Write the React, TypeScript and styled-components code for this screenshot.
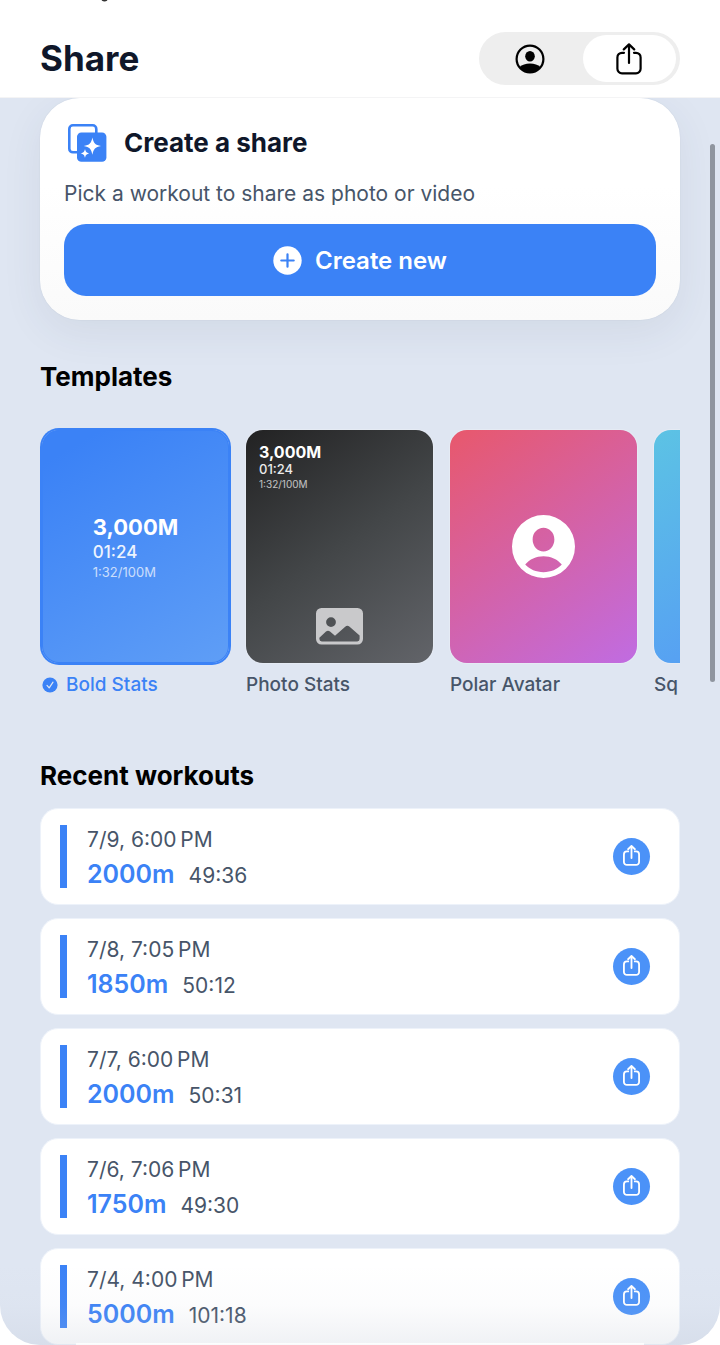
import React from "react";
import styled, { createGlobalStyle } from "styled-components";

const blue = "#3b82f6";
const slate = "#475569";
const ink = "#0f172a";

const GlobalStyle = createGlobalStyle`
  *, *::before, *::after { box-sizing: border-box; }
  body { margin: 0; background: #fff; font-family: Inter, "Liberation Sans", sans-serif; }
  button { font: inherit; color: inherit; border: 0; padding: 0; background: none; cursor: pointer; }
  h1, h2, p, ul { margin: 0; padding: 0; }
  svg { display: block; flex: none; }
`;

const Screen = styled.div`
  position: relative;
  display: flex;
  flex-direction: column;
  height: 100vh;
  overflow: hidden;
`;

const Header = styled.header`
  position: relative;
  display: flex;
  align-items: center;
  justify-content: space-between;
  flex: none;
  height: 98px;
  padding: 20px 40px 0;
  background: #fff;
  border-bottom: 1px solid #f4f4f5;
`;

const StatusTail = styled.svg`
  position: absolute;
  top: 0;
  left: 100px;
`;

const PageTitle = styled.h1`
  padding-bottom: 2px;
  font-size: 35px;
  line-height: 44px;
  font-weight: 700;
  color: ${ink};
`;

const Segmented = styled.div`
  display: grid;
  grid-template-columns: 1fr 1fr;
  gap: 6px;
  width: 201px;
  height: 53px;
  padding: 3px 4px;
  border-radius: 27px;
  background: #eeeeee;
`;

const Segment = styled.button<{ $active?: boolean }>`
  display: flex;
  align-items: center;
  justify-content: center;
  border-radius: 24px;
  color: #000;
  background: ${(p) => (p.$active ? "#fff" : "transparent")};
`;

const Main = styled.main`
  position: relative;
  flex: 1;
  min-height: 0;
  overflow: hidden;
  padding: 0 40px;
  background: #dfe6f2;
  border-radius: 0 0 40px 40px;
`;

const Card = styled.section`
  display: flex;
  flex-direction: column;
  gap: 16px;
  padding: 24px;
  border-radius: 40px;
  background: linear-gradient(#fff 40%, #fafafa);
  box-shadow: 0 12px 40px rgba(51, 65, 95, 0.08), 0 0 1px rgba(51, 65, 95, 0.2);
`;

const CardHead = styled.div`
  display: flex;
  align-items: center;
  gap: 17px;
  height: 42px;
  padding-left: 4px;
`;

const Heading = styled.h2<{ $color?: string }>`
  font-size: 26px;
  line-height: 32px;
  font-weight: 700;
  color: ${(p) => p.$color ?? "#000"};
`;

const Hint = styled.p`
  font-size: 21px;
  line-height: 28px;
  color: ${slate};
`;

const CreateButton = styled.button`
  display: flex;
  align-items: center;
  justify-content: center;
  gap: 13px;
  height: 72px;
  border-radius: 22px;
  background: ${blue};
  color: #fff;
  font-size: 24px;
  font-weight: 600;
`;

const TemplatesSection = styled.section`
  display: flex;
  flex-direction: column;
  gap: 35px;
  margin-top: 41px;
`;

const RecentSection = styled.section`
  display: flex;
  flex-direction: column;
  gap: 16px;
  margin-top: 63px;
`;

const Carousel = styled.div`
  display: flex;
  gap: 17px;
  padding: 2px 0 0 2px;
  overflow: hidden;
`;

const Template = styled.button<{ $selected?: boolean }>`
  display: flex;
  flex-direction: column;
  gap: 10px;
  flex: none;
  width: 187px;
  text-align: left;
  color: ${(p) => (p.$selected ? blue : slate)};
`;

const Preview = styled.span<{ $fill: string; $selected?: boolean }>`
  display: flex;
  flex-direction: column;
  align-items: center;
  justify-content: center;
  width: 100%;
  height: 233px;
  border-radius: 17px;
  background: ${(p) => p.$fill};
  box-shadow: ${(p) =>
    p.$selected ? `0 0 0 2px ${blue}, inset 0 0 0 1px ${blue}` : "0 0 0 1px rgba(255, 255, 255, 0.2)"};
`;

const PhotoPreview = styled(Preview)`
  justify-content: space-between;
  padding: 13px 13px 18px;
`;

const TemplateName = styled.span`
  display: flex;
  align-items: center;
  gap: 8px;
  font-size: 19px;
  line-height: 24px;
  font-weight: 500;
  white-space: nowrap;
`;

const Stats = styled.span<{ $small?: boolean }>`
  display: flex;
  flex-direction: column;
  align-self: ${(p) => (p.$small ? "flex-start" : "auto")};
  color: #fff;
`;

const StatLine = styled.span<{ $size: number; $line: number; $weight: number; $alpha: number }>`
  font-size: ${(p) => p.$size}px;
  line-height: ${(p) => p.$line}px;
  font-weight: ${(p) => p.$weight};
  opacity: ${(p) => p.$alpha};
`;

const WorkoutList = styled.ul`
  display: flex;
  flex-direction: column;
  gap: 13px;
  list-style: none;
`;

const WorkoutRow = styled.li`
  display: flex;
  align-items: center;
  height: 97px;
  padding: 0 29px 0 19px;
  border: 1px solid #edf2fa;
  border-radius: 18px;
  background: #fff;
`;

const Accent = styled.span`
  flex: none;
  width: 7px;
  height: 63px;
  margin-right: 20px;
  background: ${blue};
`;

const WorkoutInfo = styled.div`
  display: flex;
  flex-direction: column;
  gap: 2px;
  flex: 1;
  padding-top: 2px;
  font-size: 21px;
  line-height: 32px;
  color: ${slate};
`;

const Result = styled.div`
  display: flex;
  align-items: baseline;
  gap: 14px;
`;

const Distance = styled.strong`
  font-size: 25px;
  font-weight: 600;
  color: ${blue};
`;

const ShareButton = styled.button`
  display: flex;
  align-items: center;
  justify-content: center;
  width: 37px;
  height: 37px;
  padding-bottom: 2px;
  border-radius: 50%;
  background: #4b92f8;
  color: #fff;
`;

const BottomFade = styled.div`
  position: absolute;
  inset: auto 0 0;
  height: 80px;
  pointer-events: none;
  background: linear-gradient(rgba(190, 198, 212, 0), rgba(190, 198, 212, 0.05) 50%, rgba(190, 198, 212, 0.24));

  &::after {
    content: "";
    position: absolute;
    inset: auto 76px 0;
    height: 2px;
    background: rgba(255, 255, 255, 0.8);
  }
`;

const ScrollThumb = styled.div`
  position: absolute;
  top: 144px;
  right: 5px;
  width: 5px;
  height: 40%;
  border-radius: 3px;
  background: #8f959f;
`;

function ShareIcon({ width, height, stroke }: { width: number; height: number; stroke: number }) {
  return (
    <svg
      width={width}
      height={height}
      viewBox="0 0 26 32"
      fill="none"
      stroke="currentColor"
      strokeWidth={stroke}
      strokeLinecap="round"
      strokeLinejoin="round"
      aria-hidden="true"
    >
      <path d="M8 9.8H6A4.6 4.6 0 0 0 1.4 14.4V25.8A4.6 4.6 0 0 0 6 30.4H20A4.6 4.6 0 0 0 24.6 25.8V14.4A4.6 4.6 0 0 0 20 9.8H18" />
      <path d="M13 1.6V20M7.8 6.4L13 1.4L18.2 6.4" />
    </svg>
  );
}

function ProfileIcon() {
  return (
    <svg width="30" height="30" viewBox="0 0 30 30" aria-hidden="true">
      <circle cx="15" cy="15" r="13.4" fill="none" stroke="#000" strokeWidth="2.2" />
      <ellipse cx="15" cy="12.2" rx="4.8" ry="5.2" />
      <path d="M4.4 23.2Q8.4 19.6 15 19.6T25.6 23.2A13.4 13.4 0 0 1 4.4 23.2Z" />
    </svg>
  );
}

function CreateIcon() {
  return (
    <svg width="39" height="38" viewBox="0 0 39 38" aria-hidden="true">
      <rect x="1.3" y="1.3" width="27" height="27" rx="3.6" fill="#fff" stroke={blue} strokeWidth="2.6" />
      <rect x="9" y="8.4" width="29.4" height="29.4" rx="4.4" fill={blue} />
      <path
        fill="#fff"
        d="M24.4 13.4C25.6 19.2 27.2 20.8 33 22C27.2 23.2 25.6 24.8 24.4 30.8C23.2 24.8 21.6 23.2 15.8 22C21.6 20.8 23.2 19.2 24.4 13.4Z"
      />
      <circle cx="17" cy="29.4" r="5.4" fill={blue} />
      <path
        fill="#fff"
        d="M17 25C17.7 28 18.4 28.7 21.4 29.4C18.4 30.1 17.7 30.8 17 33.8C16.3 30.8 15.6 30.1 12.6 29.4C15.6 28.7 16.3 28 17 25Z"
      />
    </svg>
  );
}

function PlusIcon() {
  return (
    <svg width="29" height="29" viewBox="0 0 29 29" aria-hidden="true">
      <circle cx="14.5" cy="14.5" r="14.2" fill="#fff" />
      <path d="M14.5 8.3V20.7M8.3 14.5H20.7" stroke={blue} strokeWidth="2.2" strokeLinecap="round" />
    </svg>
  );
}

function CheckIcon() {
  return (
    <svg width="16" height="16" viewBox="0 0 16 16" aria-hidden="true">
      <circle cx="8" cy="8" r="7.6" fill={blue} />
      <path
        d="M5 8.4L7.2 10.9L11 5.2"
        fill="none"
        stroke="#dfe6f2"
        strokeWidth="1.2"
        strokeLinecap="round"
        strokeLinejoin="round"
      />
    </svg>
  );
}

function PhotoIcon() {
  return (
    <svg width="47" height="37" viewBox="0 0 47 37" aria-hidden="true">
      <path
        fill="#c9c9cb"
        fillRule="evenodd"
        d="M5.5 0H41.5A5.5 5.5 0 0 1 47 5.5V31A5.5 5.5 0 0 1 41.5 36.5H5.5A5.5 5.5 0 0 1 0 31V5.5A5.5 5.5 0 0 1 5.5 0ZM15 9.2A4.9 4.9 0 1 0 15 19A4.9 4.9 0 1 0 15 9.2ZM3.4 29.8V31A2.4 2.4 0 0 0 5.8 33.4H41.2A2.4 2.4 0 0 0 43.6 31V27.6L33.6 18.7Q31.4 16.9 29.2 18.7L19 27.8L14 23.6Q12 22 10 23.6Z"
      />
    </svg>
  );
}

function AvatarIcon() {
  return (
    <svg width="63" height="63" viewBox="0 0 62 62" aria-hidden="true">
      <path
        fill="#fff"
        fillRule="evenodd"
        d="M31 0A31 31 0 1 1 31 62A31 31 0 1 1 31 0ZM31 12.6C25 12.6 20.3 17.6 20.3 24.2C20.3 30.6 25 36 31 36C37 36 41.7 30.6 41.7 24.2C41.7 17.6 37 12.6 31 12.6ZM13 48.8C17.4 43.6 23.6 40.6 31 40.6C38.4 40.6 44.6 43.6 49 48.8C44.4 53.6 38.4 56.3 31 56.3C23.6 56.3 17.6 53.6 13 48.8Z"
      />
    </svg>
  );
}

const workouts = [
  { date: "7/9, 6:00\u202fPM", distance: "2000m", time: "49:36" },
  { date: "7/8, 7:05\u202fPM", distance: "1850m", time: "50:12" },
  { date: "7/7, 6:00\u202fPM", distance: "2000m", time: "50:31" },
  { date: "7/6, 7:06\u202fPM", distance: "1750m", time: "49:30" },
  { date: "7/4, 4:00\u202fPM", distance: "5000m", time: "101:18" },
];

export default function App() {
  return (
    <>
      <GlobalStyle />
      <Screen>
        <Header>
          <StatusTail width="9" height="2" viewBox="0 0 9 2" aria-hidden="true">
            <path d="M2 0Q4.5 1.6 7 0" fill="none" stroke="#333" strokeWidth="1.4" />
          </StatusTail>
          <PageTitle>Share</PageTitle>
          <Segmented role="group" aria-label="View">
            <Segment aria-label="Profile" aria-pressed={false}>
              <ProfileIcon />
            </Segment>
            <Segment $active aria-label="Share" aria-pressed>
              <ShareIcon width={26} height={32} stroke={2.2} />
            </Segment>
          </Segmented>
        </Header>
        <Main>
          <Card>
            <CardHead>
              <CreateIcon />
              <Heading $color={ink}>Create a share</Heading>
            </CardHead>
            <Hint>Pick a workout to share as photo or video</Hint>
            <CreateButton>
              <PlusIcon />
              Create new
            </CreateButton>
          </Card>

          <TemplatesSection>
            <Heading>Templates</Heading>
            <Carousel>
              <Template $selected aria-pressed>
                <Preview $selected $fill="linear-gradient(150deg, #3b82f6 10%, #5f9ef6)">
                  <Stats>
                    <StatLine $size={22} $line={28} $weight={700} $alpha={1}>3,000M</StatLine>
                    <StatLine $size={17} $line={22} $weight={500} $alpha={0.9}>01:24</StatLine>
                    <StatLine $size={13} $line={18} $weight={400} $alpha={0.7}>1:32/100M</StatLine>
                  </Stats>
                </Preview>
                <TemplateName>
                  <CheckIcon />
                  Bold Stats
                </TemplateName>
              </Template>
              <Template>
                <PhotoPreview $fill="linear-gradient(145deg, #222223, #434648 50%, #626469)">
                  <Stats $small>
                    <StatLine $size={16} $line={18} $weight={700} $alpha={1}>3,000M</StatLine>
                    <StatLine $size={13} $line={17} $weight={500} $alpha={0.9}>01:24</StatLine>
                    <StatLine $size={10} $line={12} $weight={400} $alpha={0.7}>1:32/100M</StatLine>
                  </Stats>
                  <PhotoIcon />
                </PhotoPreview>
                <TemplateName>Photo Stats</TemplateName>
              </Template>
              <Template>
                <Preview $fill="linear-gradient(145deg, #e8586c, #c06ce2)">
                  <AvatarIcon />
                </Preview>
                <TemplateName>Polar Avatar</TemplateName>
              </Template>
              <Template>
                <Preview $fill="linear-gradient(150deg, #5cc3e4, #5594f8)" />
                <TemplateName>Sq</TemplateName>
              </Template>
            </Carousel>
          </TemplatesSection>

          <RecentSection>
            <Heading>Recent workouts</Heading>
            <WorkoutList>
              {workouts.map((w) => (
                <WorkoutRow key={w.date}>
                  <Accent />
                  <WorkoutInfo>
                    <span>{w.date}</span>
                    <Result>
                      <Distance>{w.distance}</Distance>
                      <span>{w.time}</span>
                    </Result>
                  </WorkoutInfo>
                  <ShareButton aria-label={`Share ${w.distance} workout`}>
                    <ShareIcon width={17} height={21} stroke={2.8} />
                  </ShareButton>
                </WorkoutRow>
              ))}
            </WorkoutList>
          </RecentSection>
          <BottomFade />
        </Main>
        <ScrollThumb />
      </Screen>
    </>
  );
}
